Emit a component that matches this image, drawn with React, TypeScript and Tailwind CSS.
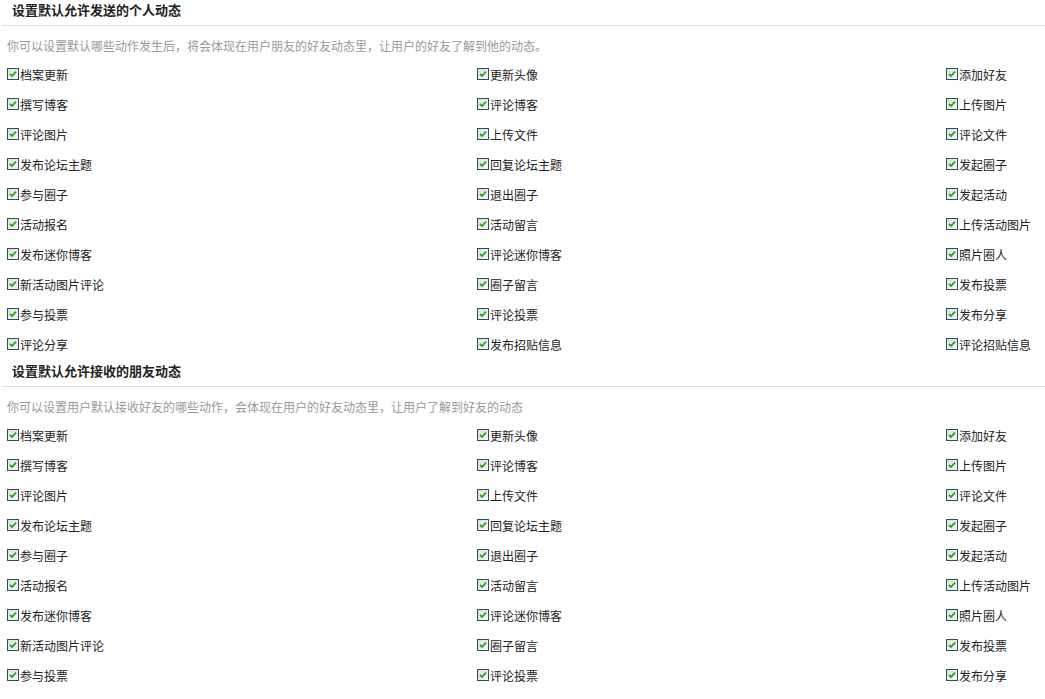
import React from 'react';

const items = [
  ['档案更新', '更新头像', '添加好友'],
  ['撰写博客', '评论博客', '上传图片'],
  ['评论图片', '上传文件', '评论文件'],
  ['发布论坛主题', '回复论坛主题', '发起圈子'],
  ['参与圈子', '退出圈子', '发起活动'],
  ['活动报名', '活动留言', '上传活动图片'],
  ['发布迷你博客', '评论迷你博客', '照片圈人'],
  ['新活动图片评论', '圈子留言', '发布投票'],
  ['参与投票', '评论投票', '发布分享'],
  ['评论分享', '发布招贴信息', '评论招贴信息'],
];

function CheckMark() {
  return (
    <span className="inline-flex w-[12px] h-[12px] -mt-[2px] border border-[#2b4f5f] bg-gradient-to-br from-[#dedfd8] to-[#f8f8f6] items-center justify-center shrink-0">
      <svg width="8" height="8" viewBox="0 0 8 8">
        <path d="M1 3.8 L3 6 L7 1.6" fill="none" stroke="#21a121" strokeWidth="1.8" />
      </svg>
    </span>
  );
}

function Option({ label }: { label: string }) {
  return (
    <label className="flex items-center h-[30px] text-[12px] text-[#222]">
      <CheckMark />
      <span className="ml-[1px] leading-[14px]">{label}</span>
    </label>
  );
}

function Section({ title, desc, first }: { title: string; desc: string; first?: boolean }) {
  return (
    <div className={first ? '' : 'mt-[1px]'}>
      <div className="ml-[2px] h-[26px] border-b border-[#dddddd]">
        <h2 className="pl-[10px] text-[13px] font-bold text-[#222] leading-[20px]">{title}</h2>
      </div>
      <p className="h-[34px] pl-[7px] pt-[12px] text-[12px] leading-[16px] text-[#999]">{desc}</p>
      <div className="pl-[7px]">
        {items.map((row, i) => (
          <div key={i} className="grid grid-cols-[470px_469px_1fr]">
            {row.map((label) => (
              <Option key={label} label={label} />
            ))}
          </div>
        ))}
      </div>
    </div>
  );
}

export default function App() {
  return (
    <div
      className="h-screen w-full overflow-hidden bg-white"
      style={{ fontFamily: '"Noto Sans CJK SC", "Liberation Sans", sans-serif' }}
    >
      <Section
        first
        title="设置默认允许发送的个人动态"
        desc="你可以设置默认哪些动作发生后，将会体现在用户朋友的好友动态里，让用户的好友了解到他的动态。"
      />
      <Section
        title="设置默认允许接收的朋友动态"
        desc="你可以设置用户默认接收好友的哪些动作，会体现在用户的好友动态里，让用户了解到好友的动态"
      />
    </div>
  );
}
